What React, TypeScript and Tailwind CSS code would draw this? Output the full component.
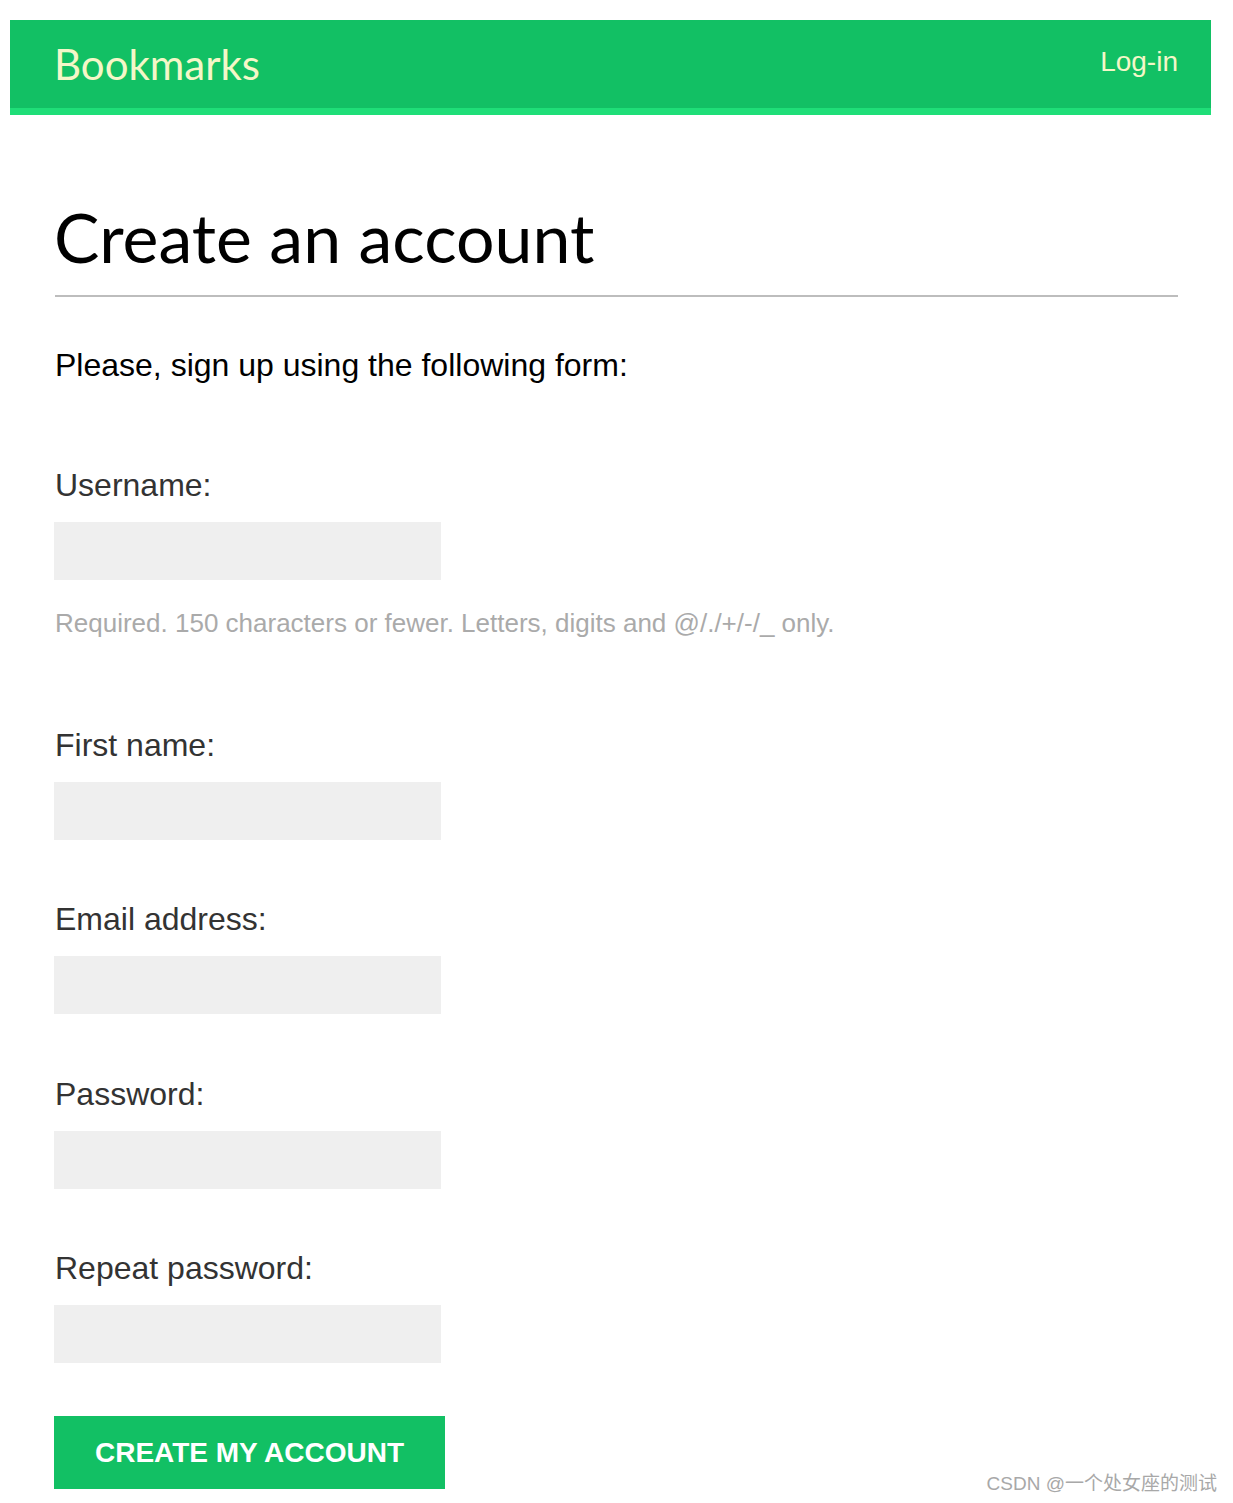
import React from 'react';

const fields = [
  { label: 'Username:', help: 'Required. 150 characters or fewer. Letters, digits and @/./+/-/_ only.' },
  { label: 'First name:' },
  { label: 'Email address:' },
  { label: 'Password:', type: 'password', extra: 'mt-[60px]' },
  { label: 'Repeat password:', type: 'password' },
];

const sans = "font-['Liberation_Sans',Arial,sans-serif]";

export default function App() {
  return (
    <div className="relative min-h-[1503px] bg-white pt-[20px]">
      {/* header */}
      <div className="ml-[10px] w-[1201px] bg-[#12c064] border-b-[7px] border-[#1fde78]">
        <div className="flex h-[88px] items-center justify-between pl-[45px] pr-[33px]">
          <span className="font-['Lato',sans-serif] text-[42px] leading-none text-[#f4f7c8] -mt-[1px] -ml-[1px]">
            Bookmarks
          </span>
          <a className={`${sans} text-[28px] leading-none text-[#f4f7c8] -mt-[4px]`}>Log-in</a>
        </div>
      </div>

      {/* content */}
      <div className="ml-[55px] w-[1123px] pt-[85px]">
        <h1 className="font-['Lato',sans-serif] text-[68px] leading-[80px] text-black -mt-[3px] -ml-[1px]">
          Create an account
        </h1>
        <div className="mt-[18px] h-[2px] bg-[#bdbdbd]" />

        <p className={`${sans} mt-[48px] text-[32px] leading-[40px] text-black`}>
          Please, sign up using the following form:
        </p>

        <form className="mt-[21px] flex flex-col items-start" onSubmit={(e) => e.preventDefault()}>
          {fields.map((f) => (
            <div key={f.label} className="flex flex-col items-start">
              <label className={`${sans} ${f.extra || 'mt-[59px]'} block text-[32px] leading-[40px] text-[#333]`}>
                {f.label}
              </label>
              <input
                type={f.type || 'text'}
                className="mt-[17px] block h-[58px] w-[387px] -ml-[1px] bg-[#efefef] outline-none"
              />
              {f.help && (
                <p className={`${sans} mt-[26px] mb-[26px] text-[26px] leading-[34px] text-[#aaaaaa]`}>
                  {f.help}
                </p>
              )}
            </div>
          ))}
          <button
            type="submit"
            className={`${sans} mt-[53px] -ml-[1px] h-[73px] w-[391px] bg-[#12c064] text-[28px] font-bold uppercase text-white`}
          >
            Create my account
          </button>
        </form>
      </div>

      <span className="absolute right-[16px] top-[1472px] font-['Liberation_Sans','Noto_Sans_CJK_SC',sans-serif] text-[19px] leading-[24px] text-[#a8a8a8]">
        CSDN @一个处女座的测试
      </span>
    </div>
  );
}
